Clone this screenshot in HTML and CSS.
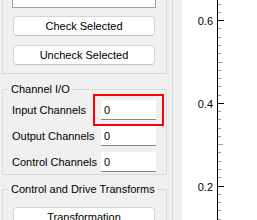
FILE: index.html
```html
<!DOCTYPE html>
<html>
<head>
    <meta charset="utf-8">
    <meta name="viewport" content="width=device-width, initial-scale=1">
    <title>Channel Setup</title>
    <link rel="stylesheet" href="styles.css">
</head>
<body>
    <div class="window">
        <aside class="panel">
            <div class="panel-inner">
                <fieldset class="group group-select">
                    <div class="list-box"></div>
                    <button class="push-button">Check Selected</button>
                    <button class="push-button">Uncheck Selected</button>
                </fieldset>

                <fieldset class="group group-io">
                    <legend>Channel I/O</legend>
                    <div class="form-row">
                        <label for="input-channels">Input Channels</label>
                        <span class="field">
                            <input id="input-channels" class="line-edit" value="0">
                            <span class="highlight"></span>
                        </span>
                    </div>
                    <div class="form-row">
                        <label for="output-channels">Output Channels</label>
                        <span class="field"><input id="output-channels" class="line-edit" value="0"></span>
                    </div>
                    <div class="form-row">
                        <label for="control-channels">Control Channels</label>
                        <span class="field"><input id="control-channels" class="line-edit" value="0"></span>
                    </div>
                </fieldset>

                <fieldset class="group group-transforms">
                    <legend>Control and Drive Transforms</legend>
                    <button class="push-button">Transformation</button>
                </fieldset>
            </div>
        </aside>

        <section class="plot">
            <svg width="75" height="220" viewBox="0 0 75 220">
                <path class="axis" d="M35.5 0V220" />
                <path class="tick-minor" d="M36 4.5h3M36 12.5h3M36 28.5h3M36 37.5h3M36 45.5h3M36 53.5h3M36 70.5h3M36 78.5h3M36 86.5h3M36 95.5h3M36 111.5h3M36 119.5h3M36 128.5h3M36 136.5h3M36 152.5h3M36 161.5h3M36 169.5h3M36 177.5h3M36 194.5h3M36 202.5h3M36 210.5h3M36 219.5h3" />
                <path class="tick-medium" d="M36 62.5h5M36 144.5h5" />
                <path class="tick-major" d="M36 20.5h6M36 103.5h6M36 186.5h6" />
                <text class="tick-label" x="31" y="25">0.6</text>
                <text class="tick-label" x="31" y="108">0.4</text>
                <text class="tick-label" x="31" y="191">0.2</text>
            </svg>
        </section>
    </div>
</body>
</html>
```

FILE: styles.css
```css
* { box-sizing: border-box; margin: 0; }

body {
    margin: 0;
    overflow: hidden;
    font-family: "Liberation Sans", Arial, sans-serif;
    font-size: 11px;
    color: #000;
}

.window {
    display: flex;
    height: 220px;
    overflow: hidden;
}

.panel {
    width: 182px;
    flex: none;
    background: #f0f0f0;
    padding-right: 9px;
}

.panel-inner {
    height: 100%;
    padding-left: 2px;
    border-right: 1px solid #dadada;
}

.group {
    width: 165px;
    border: 1px solid #dadada;
    padding: 0 9px;
    min-inline-size: 0;
}

.group legend {
    margin-left: -3px;
    padding: 0 2px;
    line-height: 13px;
}

.group-select {
    border-top: none;
    padding-bottom: 8px;
}

.group-io {
    margin-top: 9px;
    padding-top: 4px;
    padding-bottom: 2px;
}

.group-transforms {
    margin-top: 8px;
    padding-top: 11px;
}

.list-box {
    width: 144px;
    height: 8px;
    background: #fff;
    border: 1px solid #a0a0a0;
    border-top: none;
}

.push-button {
    display: block;
    width: 142px;
    height: 20px;
    margin: 9px 1px 0;
    padding: 0;
    font: inherit;
    color: inherit;
    background: #fdfdfd;
    border: 1px solid #d6d6d6;
    border-bottom-color: #c2c2c2;
    border-radius: 4px;
}

.list-box + .push-button {
    margin-top: 8px;
}

.group-transforms .push-button {
    margin-top: 0;
}

.form-row {
    display: grid;
    grid-template-columns: 89px 55px;
    align-items: center;
    height: 20px;
}

.form-row + .form-row {
    margin-top: 6px;
}

.field {
    position: relative;
    display: block;
    height: 20px;
}

.line-edit {
    display: block;
    width: 55px;
    height: 20px;
    padding: 0 3px;
    font: inherit;
    color: inherit;
    background: #fff;
    border: none;
    border-bottom: 1px solid #868686;
    outline: none;
}

.highlight {
    position: absolute;
    inset: -6px -8px -6px -8px;
    border: 2px solid #ff0000;
    pointer-events: none;
}

.plot {
    flex: 1;
    background: #fff;
}

.plot svg {
    display: block;
}

.axis {
    stroke: #000;
    stroke-width: 1;
}

.tick-major {
    stroke: #000;
    stroke-width: 1;
}

.tick-minor,
.tick-medium {
    stroke: #a0a0a0;
    stroke-width: 1;
}

.tick-label {
    font-family: "Liberation Sans", Arial, sans-serif;
    font-size: 11px;
    fill: #000;
    text-anchor: end;
}
```
